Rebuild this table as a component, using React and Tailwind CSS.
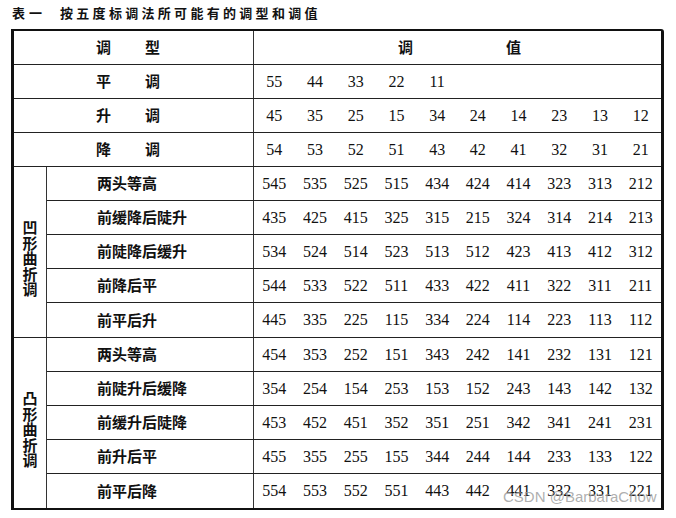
import React from "react";

const cjk = { fontFamily: '"Noto Sans CJK SC", "Noto Sans", sans-serif' };
const serif = { fontFamily: '"Liberation Serif", "Times New Roman", serif' };

const simple = [
  { a: "平", b: "调", v: ["55", "44", "33", "22", "11"] },
  { a: "升", b: "调", v: ["45", "35", "25", "15", "34", "24", "14", "23", "13", "12"] },
  { a: "降", b: "调", v: ["54", "53", "52", "51", "43", "42", "41", "32", "31", "21"] },
];

const groups = [
  {
    label: "凹形曲折调",
    rows: [
      ["两头等高", ["545", "535", "525", "515", "434", "424", "414", "323", "313", "212"]],
      ["前缓降后陡升", ["435", "425", "415", "325", "315", "215", "324", "314", "214", "213"]],
      ["前陡降后缓升", ["534", "524", "514", "523", "513", "512", "423", "413", "412", "312"]],
      ["前降后平", ["544", "533", "522", "511", "433", "422", "411", "322", "311", "211"]],
      ["前平后升", ["445", "335", "225", "115", "334", "224", "114", "223", "113", "112"]],
    ],
  },
  {
    label: "凸形曲折调",
    rows: [
      ["两头等高", ["454", "353", "252", "151", "343", "242", "141", "232", "131", "121"]],
      ["前陡升后缓降", ["354", "254", "154", "253", "153", "152", "243", "143", "142", "132"]],
      ["前缓升后陡降", ["453", "452", "451", "352", "351", "251", "342", "341", "241", "231"]],
      ["前升后平", ["455", "355", "255", "155", "344", "244", "144", "233", "133", "122"]],
      ["前平后降", ["554", "553", "552", "551", "443", "442", "441", "332", "331", "221"]],
    ],
  },
];

function Values({ v }) {
  return (
    <div className="flex-1 grid grid-cols-10 items-center text-[16px] text-[#111]" style={serif}>
      {v.map((n, i) => (
        <span key={i} className="text-center">{n}</span>
      ))}
    </div>
  );
}

export default function App() {
  return (
    <div className="relative w-[676px] h-[518px] bg-white overflow-hidden text-[#111]">
      <div className="pt-[5px] pl-[12px] h-[21px] text-[13px] leading-[16px] font-bold flex" style={cjk}>
        <span className="tracking-[4px]">表一</span>
        <span className="ml-[14px] tracking-[3.3px]">按五度标调法所可能有的调型和调值</span>
      </div>
      <div className="ml-[11px] mt-[8px] w-[653px] border-l-[3px] border-r-[3px] border-t-2 border-b-2 border-[#111] rounded-tr-[3px] flex flex-col">
        <div className="h-[34px] flex border-b border-[#222]">
          <div className="w-[240px] border-r border-[#333] flex items-center pl-[82px] gap-[34px] text-[15px] font-semibold" style={cjk}>
            <span>调</span>
            <span>型</span>
          </div>
          <div className="flex-1 flex items-center justify-center gap-[93px] pl-[4px] text-[15px] font-semibold" style={cjk}>
            <span>调</span>
            <span>值</span>
          </div>
        </div>
        {simple.map((r, i) => (
          <div key={i} className="h-[34px] flex border-b border-[#222]">
            <div className="w-[240px] border-r border-[#333] flex items-center pl-[82px] gap-[34px] text-[15px] font-semibold" style={cjk}>
              <span>{r.a}</span>
              <span>{r.b}</span>
            </div>
            <Values v={r.v} />
          </div>
        ))}
        {groups.map((g, gi) => (
          <div key={gi} className={`flex ${gi === 0 ? "border-b border-[#222]" : ""}`}>
            <div className="w-[33px] border-r border-[#333] flex flex-col items-center justify-center pt-[12px] text-[15px] leading-[15.5px] font-bold" style={cjk}>
              {g.label.split("").map((c, i) => (
                <span key={i}>{c}</span>
              ))}
            </div>
            <div className="flex-1 flex flex-col">
              {g.rows.map(([name, v], ri) => (
                <div key={ri} className={`h-[34px] flex ${ri < 4 ? "border-b border-[#222]" : ""}`}>
                  <div className="w-[207px] border-r border-[#333] flex items-center pl-[50px] text-[15px] font-semibold" style={cjk}>
                    {name}
                  </div>
                  <Values v={v} />
                </div>
              ))}
            </div>
          </div>
        ))}
      </div>
      <div
        className="absolute left-[503px] top-[488px] text-[15px] leading-[18px] text-[#9a9a9a]/80"
        style={{ fontFamily: '"Liberation Sans", Arial, sans-serif' }}
      >
        CSDN @BarbaraChow
      </div>
    </div>
  );
}
